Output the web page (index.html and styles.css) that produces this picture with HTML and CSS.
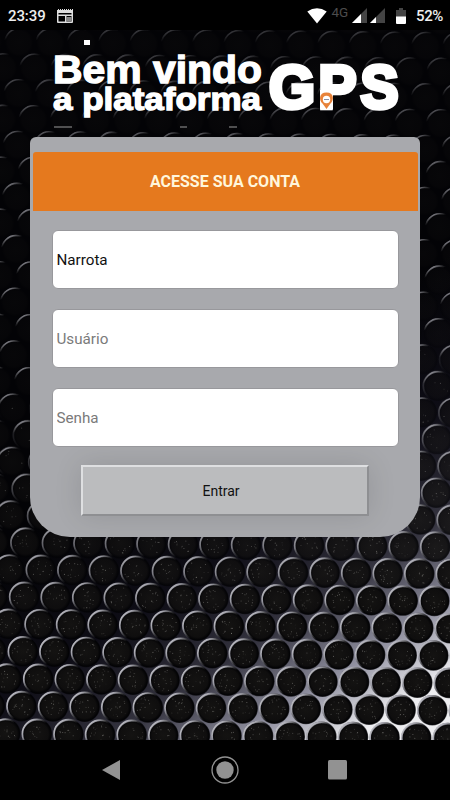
FILE: index.html
```html
<!DOCTYPE html>
<html lang="pt-BR">
<head>
<meta charset="utf-8">
<title>Acesse sua conta</title>
<link rel="stylesheet" href="styles.css">
</head>
<body>
<div class="phone">
  <header class="status">
    <span class="clock">23:39</span>
    <svg class="news" width="16" height="14" viewBox="0 0 16 14"><path fill="#ddd" fill-rule="evenodd" d="M0 1h1V0h1v1h1V0h1v1h1V0h1v1h1V0h1v1h1V0h1v1h1V0h1v1h1V0h1v1h1V0h1v13q0 1-1 1H1q-1 0-1-1zM1.500 4v1.500h13V4zM1.500 7v5.500H8V7zM9.500 7v5.500h5V7z"/><path fill="#888" d="M9 8h5.500v4.500H9z"/></svg>
    <span class="spacer"></span>
    <svg class="wifi" width="20" height="16" viewBox="0 0 20 16"><path fill="#fff" d="M.3 3.500Q10-3 19.700 3.500L10 15.500z"/></svg>
    <span class="net">4G</span>
    <svg class="signal" width="15" height="15" viewBox="0 0 15 15"><path fill="#444" d="M15 0v15H0z"/><path fill="#fff" d="M9 6v9H0z"/></svg>
    <svg class="signal second" width="15" height="15" viewBox="0 0 15 15"><path fill="#444" d="M15 0v15H0z"/><path fill="#fff" d="M6 9v6H0z"/></svg>
    <svg class="battery" width="10" height="16" viewBox="0 0 10 16"><path fill="#444" d="M3 0h4v2h3v7H0V2h3z"/><path fill="#fff" d="M0 8.500h10V15q0 1-1 1H1q-1 0-1-1z"/></svg>
    <span class="percent">52%</span>
  </header>
  <main class="page">
    <svg class="mesh" id="mesh" width="450" height="710" viewBox="0 30 450 710" aria-hidden="true">
      <defs>
        <linearGradient id="web" x1="170" y1="440" x2="370" y2="740" gradientUnits="userSpaceOnUse">
          <stop offset="0" stop-color="#030306"/><stop offset=".35" stop-color="#0e0d16"/>
          <stop offset=".6" stop-color="#34333f"/><stop offset=".8" stop-color="#9090a0"/><stop offset=".97" stop-color="#ededf0"/>
        </linearGradient>
        <linearGradient id="rim" x1=".05" y1=".15" x2=".55" y2=".5">
          <stop offset="0" stop-color="#f0f0f6"/><stop offset=".35" stop-color="#b5b5c0"/><stop offset="1" stop-color="#777" stop-opacity="0"/>
        </linearGradient>
        <linearGradient id="glint" x1=".28" y1="0" x2=".42" y2=".26">
          <stop offset="0" stop-color="#b8b8c2"/><stop offset=".8" stop-color="#888" stop-opacity="0"/>
        </linearGradient>
        <radialGradient id="hole">
          <stop offset="0" stop-color="#141312"/><stop offset=".75" stop-color="#0f0e0e"/><stop offset=".93" stop-color="#030305"/><stop offset="1" stop-color="#030305" stop-opacity=".7"/>
        </radialGradient>
      </defs>
      <rect y="30" width="450" height="710" fill="url(#web)"/>
    </svg>
    <svg class="logo" width="450" height="107" viewBox="0 30 450 107">
      <path fill="#fff" d="M84 40h6v5h-6z"/>
      <path fill="#999" d="M54 126.500h18v1H54zM180 126.500h7v1h-7zM229 126.500h8v1h-8z"/>
      <text class="word" x="53" y="83" font-size="38" textLength="209" lengthAdjust="spacingAndGlyphs">Bem vindo</text>
      <text class="word" x="53" y="110" font-size="31" textLength="208" lengthAdjust="spacingAndGlyphs">a plataforma</text>
      <text class="word big" x="269" y="107.500" font-size="61" textLength="46" lengthAdjust="spacingAndGlyphs">G</text>
      <text class="word big" x="318.500" y="107.500" font-size="61" textLength="38" lengthAdjust="spacingAndGlyphs">P</text>
      <text class="word big" x="360.500" y="107.500" font-size="61" textLength="38" lengthAdjust="spacingAndGlyphs">S</text>
      <path fill="#fff" d="M320 90h13v19.500h-13z"/>
      <path fill="#e8833a" d="M326.500 92.500c-8 0-7.500 8-4 11l4 5.500 4-5.500c3.500-3 4-11-4-11z"/>
      <circle cx="326.500" cy="99.500" r="3.700" fill="#fff"/><path stroke="#8b91a5" d="M324 99.500h5"/>
    </svg>
    <form class="card">
      <h1 class="title">ACESSE SUA CONTA</h1>
      <div class="fields">
        <input class="field" type="text" value="Narrota" aria-label="Empresa">
        <input class="field" type="text" placeholder="Usuário">
        <input class="field" type="password" placeholder="Senha">
      </div>
      <button class="enter" type="button">Entrar</button>
    </form>
  </main>
  <nav class="navbar">
    <svg width="450" height="60" viewBox="0 0 450 60">
      <path fill="#929292" d="M120 20v20l-18-10z"/>
      <circle cx="225" cy="30" r="13" fill="none" stroke="#929292" stroke-width="1.300"/><circle cx="225" cy="30" r="8.700" fill="#929292"/>
      <rect x="328" y="20" width="19" height="19.500" rx="1.500" fill="#929292"/>
    </svg>
  </nav>
</div>
<script src="mesh.js"></script>
</body>
</html>
```
FILE: styles.css
```css
* { box-sizing: border-box; }
body { margin: 0; background: #000; font-family: Roboto, sans-serif; }
.phone { width: 450px; height: 800px; display: flex; flex-direction: column; overflow: hidden; }
.status { height: 30px; display: flex; align-items: center; padding: 1px 7px 0 8px; color: #eee; font-size: 15px; font-weight: 500; background: #000; }
.clock { width: 49px; letter-spacing: -.1px; }
.spacer { flex: 1; }
.wifi { margin-right: 5px; }
.net { width: 20px; color: #4c4c4c; font-size: 13.500px; font-weight: 400; line-height: 14px; margin-bottom: 7px; }
.signal { margin-right: 3.500px; }
.second { margin-right: 11px; }
.battery { margin-right: 10px; }
.percent { width: 27px; letter-spacing: -.4px; }
.page { position: relative; height: 710px; }
.mesh { position: absolute; inset: 0; }
.logo { position: relative; display: block; height: 107px; }
.word { font-family: "Liberation Sans", Arial, sans-serif; font-weight: 700; fill: #fff; stroke: #fff; stroke-width: 1.300px; }
.big { stroke-width: 4.500px; }
.card { position: relative; width: 390px; height: 400px; margin: 0 auto; padding: 15px 2.500px 0; background: #a8a9ad; border-radius: 6px 6px 40px 40px; overflow: hidden; }
.title { margin: 0; height: 58.500px; border-radius: 3px 3px 0 0; background: #e5791e; color: #fff6dc; font-size: 16px; line-height: 59px; font-weight: 700; text-align: center; }
.fields { display: flex; flex-direction: column; gap: 20px; padding: 19.500px 19px 0; }
.field { width: 100%; height: 59px; border: 1px solid #98989c; border-radius: 6px; padding: 0 4px; background: #fff; color: #111; font: 400 15.200px Roboto, sans-serif; outline: 0; }
.field::placeholder { color: #7a7a7a; opacity: 1; }
.enter { display: block; width: 288px; height: 51px; margin: 18px 0 0 48.500px; padding: 0 8px 0 0; border: 2.500px solid; border-color: #dedfe1 #8e8f92 #8e8f92 #dedfe1; background: #bbbcbe; box-shadow: 0 0 28px rgba(0,0,0,.12); color: #111; font: 400 14px Roboto, sans-serif; }
.navbar { height: 60px; background: #000; }
.navbar svg { display: block; }
```
FILE: mesh.js
```javascript
// Perforated metal: rows of holes, lit from the lower right.
const mesh = document.getElementById('mesh');
const NS = 'http://www.w3.org/2000/svg';
let seed = 7;
const rand = () => (seed = (seed * 16807) % 2147483647) / 2147483647;
const clamp = (v, a, b) => Math.max(a, Math.min(b, v));
function add(name, attrs) {
  const el = document.createElementNS(NS, name);
  for (const key in attrs) el.setAttribute(key, attrs[key]);
  mesh.appendChild(el);
}
for (let i = 26; i > -2; i--) {
  const rowY = 706 - 27.5 * i + 0.038 * i * i;
  const rowX = (i % 2 ? 6 : 21.5) + 0.7 * i - 0.007 * i * i;
  const step = 31.6 - 0.012 * i;
  for (let n = -1; n < 16; n++) {
    const x = rowX + n * step;
    const y = rowY + x * 0.01;
    const depth = clamp((y + x * 0.15 - 400) / 250, 0, 1);
    add('circle', { cx: x, cy: y, r: 15.2, fill: 'url(#hole)', opacity: 0.25 + depth * 0.75 });
    add('circle', { cx: x, cy: y, r: 14.5, fill: 'none', stroke: 'url(#rim)', 'stroke-width': 1.7, opacity: depth * 0.85 });
    add('circle', { cx: x, cy: y, r: 14, fill: 'none', stroke: 'url(#glint)', 'stroke-width': 1.6, opacity: clamp((y + 80) / 400, 0.35, 0.8) });
    const dots = Math.round(18 * depth);
    for (let k = 0; k < dots; k++) {
      const angle = rand() * 6.283, radius = Math.sqrt(rand()) * 11;
      add('circle', { cx: x + radius * Math.cos(angle), cy: y + radius * Math.sin(angle), r: 0.55, fill: '#aaa9a4', opacity: 0.1 + rand() * 0.4 });
    }
  }
}
```
